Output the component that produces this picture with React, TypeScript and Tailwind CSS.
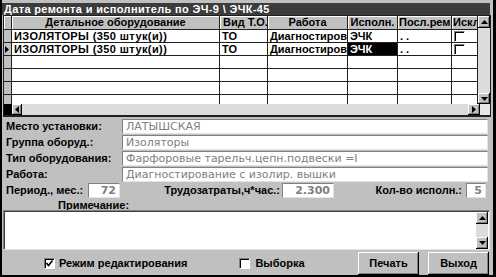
type Dir = 'up' | 'down' | 'left' | 'right'

function Arrow({ dir }: { dir: Dir }) {
  const pts = { up: '0,4 3.5,0 7,4', down: '0,0 7,0 3.5,4', left: '4,0 4,7 0,3.5', right: '0,0 0,7 4,3.5' }[dir]
  const v = dir === 'up' || dir === 'down'
  return (
    <svg width={v ? 7 : 4} height={v ? 4 : 7}>
      <polygon points={pts} fill="#000" />
    </svg>
  )
}

function ScrollBtn({ dir, size }: { dir: Dir; size: string }) {
  return (
    <div
      className={`${size} shrink-0 flex items-center justify-center bg-[#c0c0c0] shadow-[inset_-1px_-1px_0_#000,inset_1px_1px_0_#fff,inset_-2px_-2px_0_#808080]`}
    >
      <Arrow dir={dir} />
    </div>
  )
}

const cols = [
  { w: 'w-[208px]', title: 'Детальное оборудование', head: 'justify-center' },
  { w: 'w-[48px]', title: 'Вид Т.О.', head: 'justify-start pl-[3px]' },
  { w: 'w-[80px]', title: 'Работа', head: 'justify-center' },
  { w: 'w-[50px]', title: 'Исполн.', head: 'justify-center' },
  { w: 'w-[54px]', title: 'Посл.рем', head: 'justify-start pl-[1px]' },
  { w: 'w-[26px]', title: 'Искл', head: 'justify-start pl-[1px]' },
]

// видимая часть текста в узких колонках
const rows = [
  ['ИЗОЛЯТОРЫ (350 штук(и))', 'ТО', 'Диагностиров', 'ЭЧК', '.  .'],
  ['ИЗОЛЯТОРЫ (350 штук(и))', 'ТО', 'Диагностиров', 'ЭЧК', '.  .'],
  ['', '', '', '', ''],
  ['', '', '', '', ''],
  ['', '', '', '', ''],
  ['', '', '', '', ''],
]

function CheckBox({ checked }: { checked?: boolean }) {
  return (
    <div className="w-[11px] h-[11px] shrink-0 bg-white border border-t-[#808080] border-l-[#808080] border-b-white border-r-white shadow-[inset_1px_1px_0_#000] flex items-center justify-center">
      {checked && (
        <svg width="7" height="7" viewBox="0 0 7 7">
          <polyline points="0.5,3 2.5,5.5 6.5,0.5" fill="none" stroke="#000" strokeWidth="1.6" />
        </svg>
      )}
    </div>
  )
}

function Grid() {
  return (
    <div className="ml-[1px] w-[488px] h-[102px] border border-[#202020] flex flex-col bg-white">
      <div className="flex h-[88px]">
        <div className="w-[474px] overflow-hidden">
          <div className="flex">
            <div className="w-[8px] h-[14px] shrink-0 bg-[#c0c0c0] border-r border-b border-[#202020] shadow-[inset_1px_1px_0_#fff]" />
            {cols.map((c) => (
              <div
                key={c.title}
                className={`${c.w} shrink-0 h-[14px] flex items-center ${c.head} bg-[#c0c0c0] border-r border-b border-[#202020] shadow-[inset_1px_1px_0_#fff] overflow-hidden whitespace-nowrap text-[11px] font-bold`}
              >
                {c.title}
              </div>
            ))}
          </div>
          {rows.map((r, i) => (
            <div key={i} className="flex">
              <div className="w-[8px] h-[13px] shrink-0 bg-[#c0c0c0] border-r border-b border-[#202020] flex items-center pl-[1px]">
                {i === 1 && <Arrow dir="right" />}
              </div>
              {cols.map((c, j) => {
                const sel = i === 1 && j === 3
                return (
                  <div
                    key={j}
                    className={`${c.w} shrink-0 h-[13px] flex items-center px-[2px] border-r border-b border-[#202020] overflow-hidden whitespace-nowrap text-[11px] font-bold ${j === 0 ? 'tracking-[0.4px]' : ''} ${sel ? 'bg-black text-white' : 'bg-white'}`}
                  >
                    {j === 5 ? i < 2 && <CheckBox /> : r[j]}
                  </div>
                )
              })}
            </div>
          ))}
        </div>
        <div className="w-[12px] flex flex-col bg-[#dcdcdc]">
          <ScrollBtn dir="up" size="h-[12px] w-[12px]" />
          <div className="flex-1" />
          <ScrollBtn dir="down" size="h-[11px] w-[12px]" />
        </div>
      </div>
      <div className="flex h-[12px] bg-[#dcdcdc] border-b border-[#202020]">
        <div className="w-[8px] bg-black" />
        <ScrollBtn dir="left" size="w-[10px] h-[11px]" />
        <div className="flex-1" />
        <ScrollBtn dir="right" size="w-[12px] h-[11px]" />
        <div className="w-[10px] bg-[#e8e8e8]" />
      </div>
    </div>
  )
}

function Field({ label, value }: { label: string; value: string }) {
  return (
    <div className="flex items-center h-[16px]">
      <div className="w-[120px] pl-[4px] text-[11px] font-bold whitespace-nowrap">{label}</div>
      <div className="w-[366px] h-[15px] bg-white border border-t-[#808080] border-l-[#808080] border-b-[#e4e4e4] border-r-[#e4e4e4] flex items-center pl-[3px] text-[11px] text-[#808080] font-['DejaVu_Sans',sans-serif] whitespace-nowrap overflow-hidden">
        {value}
      </div>
    </div>
  )
}

function SmallInput({ value, w }: { value: string; w: string }) {
  return (
    <div className={`${w} h-[15px] bg-white border border-t-[#808080] border-l-[#808080] border-b-[#e4e4e4] border-r-[#e4e4e4] flex items-center justify-end pr-[3px] text-[11px] text-[#808080] font-['DejaVu_Sans',sans-serif]`}>
      {value}
    </div>
  )
}

function Button({ label }: { label: string }) {
  return (
    <div className="w-[61px] h-[23px] flex items-center justify-center bg-[#c0c0c0] shadow-[inset_-1px_-1px_0_#000,inset_1px_1px_0_#fff,inset_-2px_-2px_0_#808080] text-[11px] font-bold">
      {label}
    </div>
  )
}

export default function App() {
  return (
    <div className="w-[496px] h-[277px] bg-[#c0c0c0] border-l-2 border-b-2 border-r-[3px] border-black pt-[3px] pr-[3px] flex flex-col text-black leading-none font-['Liberation_Sans',Arial,sans-serif] overflow-hidden">
      <div className="h-[14px] bg-[#3c3c3c] text-white text-[11px] font-bold tracking-[0.35px] flex items-center pl-[2px] whitespace-nowrap">
        Дата ремонта и исполнитель по ЭЧ-9 \ ЭЧК-45
      </div>
      <Grid />
      <div className="flex flex-col pt-[1px]">
        <Field label="Место установки:" value="ЛАТЫШСКАЯ" />
        <Field label="Группа оборуд.:" value="Изоляторы" />
        <Field label="Тип оборудования:" value="Фарфоровые тарельч.цепн.подвески =I" />
        <Field label="Работа:" value="Диагностирование с изолир. вышки" />
        <div className="flex items-center h-[16px] text-[11px] font-bold">
          <div className="w-[86px] pl-[4px] whitespace-nowrap">Период., мес.:</div>
          <SmallInput value="72" w="w-[32px]" />
          <div className="w-[162px] text-right pr-[2px] whitespace-nowrap">Трудозатраты,ч*час.:</div>
          <SmallInput value="2.300" w="w-[52px]" />
          <div className="w-[132px] text-right pr-[4px] whitespace-nowrap">Кол-во исполн.:</div>
          <SmallInput value="5" w="w-[20px]" />
        </div>
        <div className="h-[12px] pl-[56px] pt-[2px] text-[11px] font-bold">Примечание:</div>
        <div className="ml-[1px] w-[487px] h-[40px] bg-white border border-t-[#808080] border-l-[#808080] border-b-[#e4e4e4] border-r-[#e4e4e4] shadow-[inset_1px_1px_0_#404040] flex justify-end pt-[1px] pr-[1px]">
          <div className="w-[12px] h-[37px] flex flex-col bg-[#dcdcdc]">
            <ScrollBtn dir="up" size="h-[12px] w-[12px]" />
            <div className="flex-1" />
            <ScrollBtn dir="down" size="h-[12px] w-[12px]" />
          </div>
        </div>
        <div className="flex items-center h-[24px] mt-[1px]">
          <div className="ml-[42px] flex items-center gap-[4px] text-[11px] font-bold">
            <CheckBox checked />
            <span>Режим редактирования</span>
          </div>
          <div className="ml-[52px] flex items-center gap-[5px] text-[11px] font-bold">
            <CheckBox />
            <span>Выборка</span>
          </div>
          <div className="ml-auto mr-[1px] flex gap-[9px]">
            <Button label="Печать" />
            <Button label="Выход" />
          </div>
        </div>
      </div>
    </div>
  )
}
